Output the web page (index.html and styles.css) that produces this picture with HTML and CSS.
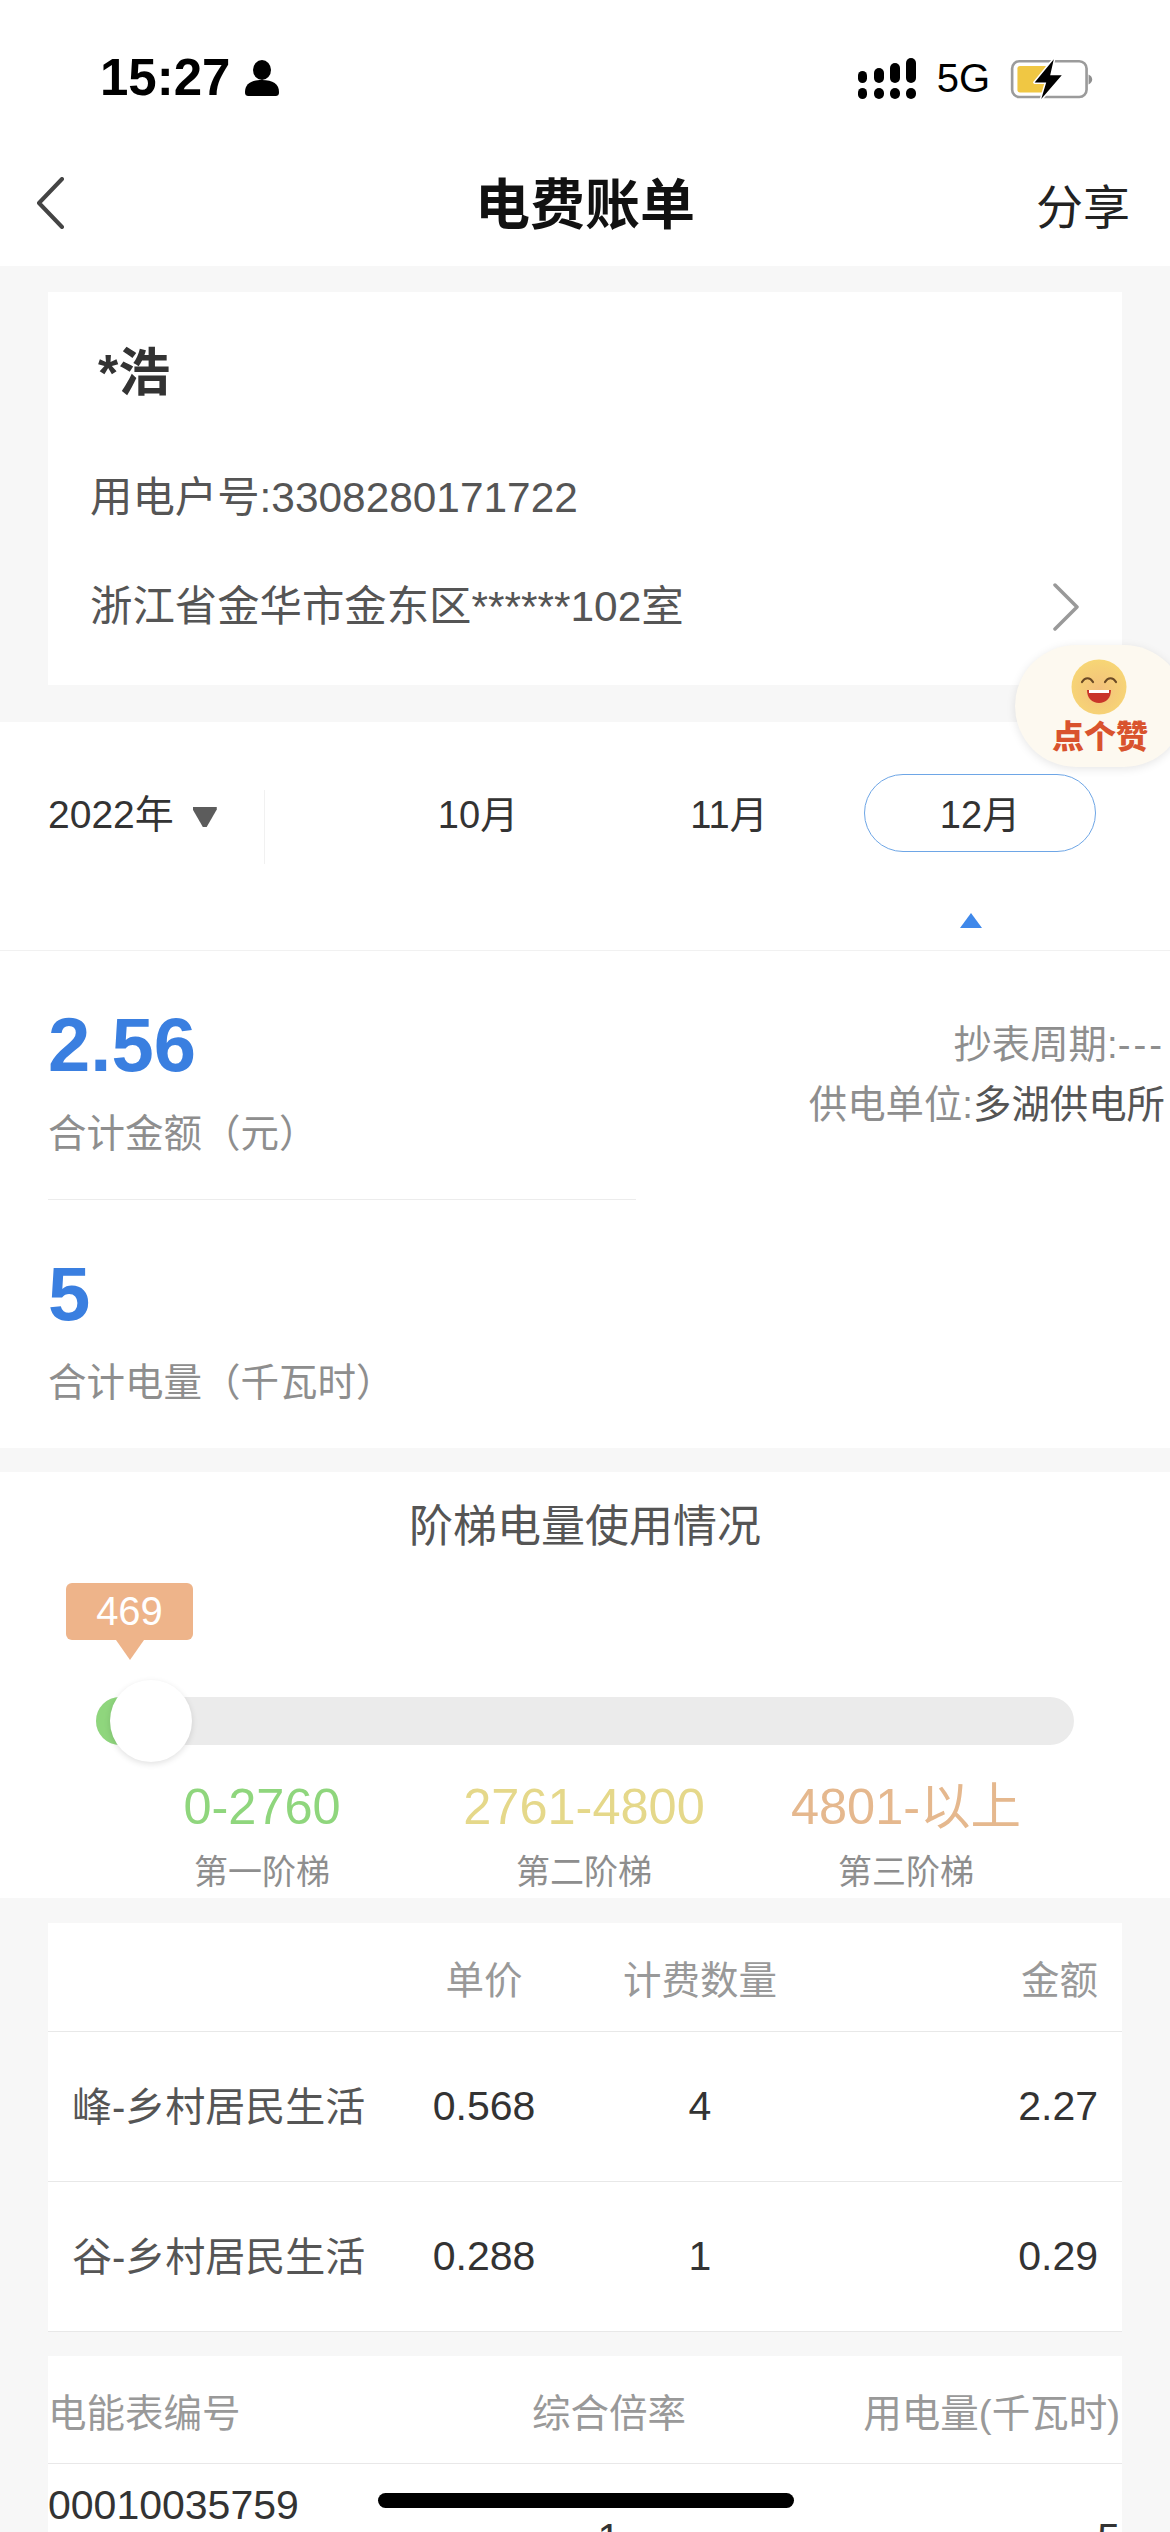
FILE: index.html
```html
<!DOCTYPE html>
<html lang="zh-CN">
<head>
    <meta charset="UTF-8">
    <meta name="viewport" content="width=device-width, initial-scale=1.0">
    <title>电费账单</title>
    <link rel="stylesheet" href="styles.css">
</head>
<body>
    <div class="status">
        <div class="status-left">
            <span class="time">15:27</span>
            <svg class="person" viewBox="0 0 34 36" width="34" height="36">
                <ellipse cx="17" cy="10" rx="9" ry="10" fill="#000"/>
                <path d="M0 32c0-8 6-12 17-12s17 4 17 12c0 3-1 4-4 4H4c-3 0-4-1-4-4z" fill="#000"/>
            </svg>
        </div>
        <div class="status-right">
            <svg class="signal" viewBox="0 0 58 41" width="58" height="41">
                <rect x="0" y="13" width="9" height="12" rx="4.5"/>
                <rect x="16" y="10" width="10" height="15" rx="5"/>
                <rect x="32" y="5" width="10" height="20" rx="5"/>
                <rect x="48" y="0" width="10" height="25" rx="5"/>
                <rect x="0" y="30" width="9" height="11" rx="4.5"/>
                <rect x="16" y="30" width="10" height="11" rx="5"/>
                <rect x="32" y="30" width="10" height="11" rx="5"/>
                <rect x="48" y="30" width="10" height="11" rx="5"/>
            </svg>
            <span class="network">5G</span>
            <svg class="battery" viewBox="620 75 260 130" width="87" height="43">
                <rect x="631" y="88" width="225" height="108" rx="22" fill="#fff" stroke="#9b9b9b" stroke-width="8"/>
                <path d="M862 128c7 3 11 9 11 15s-4 12-11 15z" fill="#8f8f8f"/>
                <rect x="647" y="102" width="90" height="80" rx="8" fill="#f0c743"/>
                <path d="M757 82l-58 70h35l-15 50 62-72h-35z" fill="#000" stroke="#fff" stroke-width="9" stroke-linejoin="round" paint-order="stroke"/>
            </svg>
        </div>
    </div>

    <div class="nav">
        <svg class="back" viewBox="0 0 30 52" width="30" height="52">
            <path d="M27 2L4 26l23 24" fill="none" stroke="#444" stroke-width="4" stroke-linecap="round" stroke-linejoin="round"/>
        </svg>
        <div class="nav-title">电费账单</div>
        <div class="nav-share">分享</div>
    </div>

    <div class="user-card">
        <div class="user-name">*浩</div>
        <div class="user-line user-no">用电户号:3308280171722</div>
        <div class="user-line user-addr">
            <span>浙江省金华市金东区******102室</span>
            <svg viewBox="0 0 28 48" width="28" height="48">
                <path d="M3 2l22 22L3 46" fill="none" stroke="#999" stroke-width="3.5" stroke-linecap="round" stroke-linejoin="round"/>
            </svg>
        </div>
    </div>

    <div class="like">
        <svg class="like-face" viewBox="0 0 56 56" width="56" height="56">
            <defs>
                <radialGradient id="faceFill" cx="50%" cy="55%" r="55%">
                    <stop offset="0%" stop-color="#f3c07c"/>
                    <stop offset="100%" stop-color="#f7d675"/>
                </radialGradient>
            </defs>
            <circle cx="28" cy="28" r="27.5" fill="url(#faceFill)"/>
            <path d="M11 23c3-5 8-5 11 0M34 23c3-5 8-5 11 0" fill="none" stroke="#6b4a25" stroke-width="2.2" stroke-linecap="round"/>
            <path d="M16 31h24c0 8-5 13-12 13s-12-5-12-13z" fill="#c9352a"/>
            <path d="M18 31h20v3H18z" fill="#fff"/>
        </svg>
        <div class="like-text">点个赞</div>
    </div>

    <div class="tabs">
        <div class="year">
            <span>2022年</span>
            <i class="year-arrow"></i>
        </div>
        <div class="months">
            <div class="month">10月</div>
            <div class="month">11月</div>
            <div class="month month-active">12月</div>
        </div>
    </div>

    <div class="bill">
        <div class="totals">
            <div class="total-num">2.56</div>
            <div class="total-label">合计金额（元）</div>
            <div class="total-line"></div>
            <div class="total-num">5</div>
            <div class="total-label">合计电量（千瓦时）</div>
        </div>
        <div class="bill-info">
            <div>抄表周期:<span class="bill-dash">---</span></div>
            <div>供电单位:<span class="bill-unit">多湖供电所</span></div>
        </div>
    </div>

    <div class="tier">
        <div class="tier-title">阶梯电量使用情况</div>
        <div class="meter">
            <div class="meter-fill"></div>
            <div class="meter-tip">469</div>
            <div class="meter-knob"></div>
        </div>
        <div class="tier-cols">
            <div>
                <div class="tier-range green">0-2760</div>
                <div class="tier-name">第一阶梯</div>
            </div>
            <div>
                <div class="tier-range yellow">2761-4800</div>
                <div class="tier-name">第二阶梯</div>
            </div>
            <div>
                <div class="tier-range orange">4801-以上</div>
                <div class="tier-name">第三阶梯</div>
            </div>
        </div>
    </div>

    <div class="sheet price-sheet">
        <div class="row head">
            <div></div>
            <div class="mid">单价</div>
            <div class="mid">计费数量</div>
            <div class="end pad">金额</div>
        </div>
        <div class="row">
            <div class="item">峰-乡村居民生活</div>
            <div class="mid">0.568</div>
            <div class="mid">4</div>
            <div class="end pad">2.27</div>
        </div>
        <div class="row">
            <div class="item">谷-乡村居民生活</div>
            <div class="mid">0.288</div>
            <div class="mid">1</div>
            <div class="end pad">0.29</div>
        </div>
    </div>

    <div class="sheet meter-sheet">
        <div class="meter-row head">
            <div>电能表编号</div>
            <div class="mid">综合倍率</div>
            <div class="end">用电量(千瓦时)</div>
        </div>
        <div class="meter-row body">
            <div class="meter-no">00010035759</div>
            <div class="mid">1</div>
            <div class="end">5</div>
        </div>
    </div>

    <div class="home-bar"></div>
</body>
</html>
```

FILE: styles.css
```css
* {
    box-sizing: border-box;
}
html, body {
    margin: 0;
    padding: 0;
}
body {
    position: relative;
    width: 1170px;
    height: 2532px;
    overflow: hidden;
    background-color: #f7f7f7;
    color: #333;
    font-family: "Liberation Sans", "Noto Sans CJK SC", sans-serif;
}

/* status bar */
.status {
    display: flex;
    align-items: center;
    justify-content: space-between;
    height: 148px;
    padding: 8px 75px 0 100px;
    background-color: #fff;
    color: #000;
}
.status-left {
    display: flex;
    align-items: center;
    gap: 15px;
}
.time {
    font-size: 51px;
    font-weight: 700;
    line-height: 60px;
}
.status-right {
    display: flex;
    align-items: center;
}
.signal {
    margin-right: 21px;
}
.network {
    font-size: 40px;
    line-height: 46px;
    margin-right: 18px;
}

/* nav */
.nav {
    display: grid;
    grid-template-columns: 1fr auto 1fr;
    align-items: center;
    height: 118px;
    padding: 0 40px 8px;
    background-color: #fff;
}
.back {
    margin-left: -5px;
}
.nav-title {
    margin-bottom: 6px;
    font-size: 55px;
    font-weight: 700;
    color: #111;
}
.nav-share {
    justify-self: end;
    font-size: 47px;
    color: #222;
}

/* user */
.user-card {
    height: 393px;
    margin: 26px 48px 37px;
    padding: 51px 42px 0;
    background-color: #fff;
    color: #555;
}
.user-name {
    padding-left: 8px;
    font-size: 52px;
    font-weight: 700;
    line-height: 60px;
    color: #333;
}
.user-line {
    font-size: 42.4px;
    line-height: 60px;
}
.user-no {
    margin-top: 65px;
}
.user-addr {
    display: flex;
    align-items: center;
    justify-content: space-between;
    margin-top: 49px;
}

/* floating like badge */
.like {
    position: absolute;
    top: 645px;
    left: 1015px;
    width: 170px;
    height: 122px;
    padding-top: 14px;
    border-radius: 61px;
    background-color: #fdf9f0;
    box-shadow: 0 2px 10px rgba(0, 0, 0, 0.1);
}
.like-face {
    display: block;
    margin-left: 56px;
}
.like-text {
    margin: 3px 0 0 37px;
    font-size: 32px;
    font-weight: 900;
    line-height: 38px;
    color: #d9532e;
}

/* year + months */
.tabs {
    display: flex;
    height: 229px;
    padding-left: 48px;
    background-color: #fff;
    border-bottom: 1px solid #f1f1f1;
}
.year {
    display: flex;
    align-items: flex-start;
    gap: 19px;
    width: 217px;
    height: 74px;
    margin-top: 68px;
    border-right: 1px solid #f1f1f1;
    font-size: 39px;
    line-height: 50px;
}
.year-arrow {
    width: 24px;
    height: 20px;
    margin-top: 17px;
    background-color: #5c5c5c;
    clip-path: polygon(0 0, 100% 0, 100% 12%, 58% 100%, 42% 100%, 0 12%);
}
.months {
    display: grid;
    grid-template-columns: repeat(3, 232px);
    gap: 19px;
    height: 78px;
    margin: 52px 0 0 97px;
}
.month {
    display: flex;
    align-items: center;
    justify-content: center;
    padding-bottom: 4px;
    font-size: 38px;
}
.month-active {
    position: relative;
    border: 1.5px solid #6ea6e6;
    border-radius: 39px;
}
.month-active::after {
    content: "";
    position: absolute;
    top: 138px;
    left: 95px;
    border-left: 11px solid transparent;
    border-right: 11px solid transparent;
    border-bottom: 15px solid #3f88ea;
}

/* totals */
.bill {
    display: flex;
    justify-content: space-between;
    height: 497px;
    padding: 54px 5px 0 48px;
    background-color: #fff;
}
.totals {
    width: 588px;
}
.total-num {
    font-size: 76px;
    font-weight: 700;
    line-height: 80px;
    color: #3a7fe0;
}
.total-label {
    margin-top: 24px;
    font-size: 38.5px;
    line-height: 50px;
    color: #8e8e8e;
}
.total-line {
    height: 1px;
    margin: 40px 0 54px;
    background-color: #ececec;
}
.bill-info {
    padding-top: 10px;
    font-size: 38.4px;
    line-height: 60px;
    text-align: right;
    color: #8e8e8e;
}
.bill-dash {
    letter-spacing: 3px;
}
.bill-unit {
    color: #555;
}

/* tier meter */
.tier {
    height: 426px;
    margin-top: 24px;
    padding-top: 25px;
    background-color: #fff;
}
.tier-title {
    font-size: 44px;
    line-height: 60px;
    text-align: center;
    color: #555;
}
.meter {
    position: relative;
    height: 48px;
    margin: 140px 96px 0;
    border-radius: 24px;
    background-color: #ebebeb;
}
.meter-fill {
    position: absolute;
    top: 0;
    left: 0;
    width: 56px;
    height: 48px;
    border-radius: 24px;
    background-color: #8fd67d;
}
.meter-knob {
    position: absolute;
    top: -17px;
    left: 14px;
    width: 82px;
    height: 82px;
    border-radius: 50%;
    background-color: #fff;
    box-shadow: 0 2px 6px rgba(0, 0, 0, 0.12);
}
.meter-tip {
    position: absolute;
    top: -114px;
    left: -30px;
    width: 127px;
    height: 57px;
    border-radius: 6px;
    background-color: #eeb48a;
    color: #fff;
    font-size: 40px;
    line-height: 57px;
    text-align: center;
}
.meter-tip::after {
    content: "";
    position: absolute;
    top: 57px;
    left: 50px;
    border-left: 14px solid transparent;
    border-right: 14px solid transparent;
    border-top: 20px solid #eeb48a;
}
.tier-cols {
    display: grid;
    grid-template-columns: repeat(3, 322px);
    margin: 32px 0 0 101px;
    text-align: center;
}
.tier-range {
    font-size: 50.5px;
    line-height: 60px;
}
.green {
    color: #8fd67d;
}
.yellow {
    color: #e5d88a;
}
.orange {
    color: #e5b88e;
}
.tier-name {
    margin-top: 10px;
    font-size: 34px;
    line-height: 50px;
    color: #8e8e8e;
}

/* tables */
.sheet {
    margin: 0 48px;
    background-color: #fff;
}
.price-sheet {
    margin-top: 25px;
}
.meter-sheet {
    margin-top: 24px;
}
.row, .meter-row {
    display: grid;
    align-items: center;
    border-bottom: 1px solid #e8e8e8;
    font-size: 41px;
}
.row {
    grid-template-columns: 320px 232px 200px 322px;
    height: 150px;
}
.meter-row {
    grid-template-columns: 400px 322px 352px;
}
.head {
    height: 109px;
    font-size: 38.5px;
    color: #999;
}
.meter-row.head {
    height: 108px;
}
.meter-row.body {
    height: 148px;
    border-bottom: none;
}
.mid {
    text-align: center;
}
.end {
    padding-right: 2px;
    text-align: right;
}
.end.pad {
    padding-right: 24px;
}
.item {
    padding: 0 0 5px 24px;
    font-size: 40px;
    color: #555;
}
.meter-no {
    align-self: start;
    padding-top: 16px;
    line-height: 50px;
}

.home-bar {
    position: absolute;
    top: 2493px;
    left: 378px;
    width: 416px;
    height: 15px;
    border-radius: 8px;
    background-color: #000;
}
```
